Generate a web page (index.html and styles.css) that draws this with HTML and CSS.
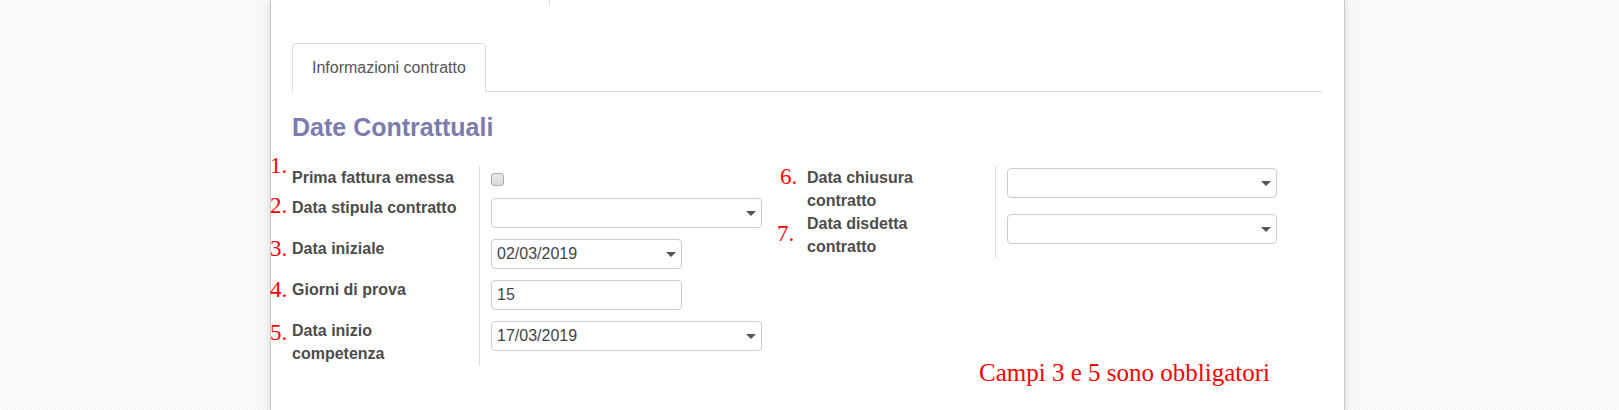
FILE: index.html
```html
<!DOCTYPE html>
<html lang="it">
<head>
<meta charset="utf-8">
<title>Informazioni contratto</title>
<link rel="stylesheet" href="styles.css">
</head>
<body>
<div class="page">
  <div class="sheet">
    <div class="topbar"><div class="topbar-box"></div></div>
    <div class="tabs"><div class="tab">Informazioni contratto</div></div>
    <h2 class="sep-title">Date Contrattuali</h2>
    <div class="groups">
      <div class="group group-left">
        <div class="lbl"><span class="num n1">1.</span>Prima fattura emessa</div>
        <div class="fld fld-check"><span class="checkbox"></span></div>

        <div class="lbl"><span class="num n2">2.</span>Data stipula contratto</div>
        <div class="fld"><div class="ctrl ctrl-lg has-caret"></div></div>

        <div class="lbl"><span class="num n3">3.</span>Data iniziale</div>
        <div class="fld"><div class="ctrl ctrl-sm has-caret">02/03/2019</div></div>

        <div class="lbl"><span class="num n4">4.</span>Giorni di prova</div>
        <div class="fld"><div class="ctrl ctrl-sm">15</div></div>

        <div class="lbl"><span class="num n5">5.</span>Data inizio competenza</div>
        <div class="fld"><div class="ctrl ctrl-lg has-caret">17/03/2019</div></div>
      </div>
      <div class="group group-right">
        <div class="lbl"><span class="num n6">6.</span>Data chiusura contratto</div>
        <div class="fld"><div class="ctrl ctrl-md has-caret"></div></div>

        <div class="lbl"><span class="num n7">7.</span>Data disdetta contratto</div>
        <div class="fld"><div class="ctrl ctrl-md has-caret"></div></div>
      </div>
    </div>
    <div class="note">Campi 3 e 5 sono obbligatori</div>
  </div>
</div>
</body>
</html>
```

FILE: styles.css
```css
html, body {
  margin: 0;
  padding: 0;
}

body {
  height: 410px;
  overflow: hidden;
  background-color: #f8f8f8;
  background-image: repeating-conic-gradient(#f5f5f5 0% 25%, #fcfcfc 0% 50%);
  background-size: 4px 4px;
  font-family: "Liberation Sans", Arial, sans-serif;
}

.page {
  padding-left: 270px;
}

.sheet {
  box-sizing: border-box;
  width: 1075px;
  min-height: 440px;
  background: #ffffff;
  border: 1px solid #c8c8d3;
  border-top: none;
  box-shadow: 0 0 9px rgba(0, 0, 0, 0.13);
  padding: 0 22px 40px 21px;
}

.topbar {
  height: 6px;
}

.topbar-box {
  width: 257px;
  height: 6px;
  border-right: 1px solid #dcdcdc;
}

.tabs {
  display: flex;
  margin-top: 37px;
  border-bottom: 1px solid #dddddd;
}

.tab {
  padding: 12px 19px;
  line-height: 23px;
  font-size: 16px;
  color: #555555;
  background: #ffffff;
  border: 1px solid #dddddd;
  border-bottom-color: #ffffff;
  border-radius: 4px 4px 0 0;
  margin-bottom: -1px;
}

.sep-title {
  margin: 20px 0 0;
  font-size: 25px;
  line-height: 30px;
  font-weight: bold;
  color: #7c7bad;
}

.groups {
  display: grid;
  grid-template-columns: 515px 515px;
  margin-top: 24px;
}

.group {
  display: grid;
  align-items: start;
  align-content: start;
}

.group-left {
  grid-template-columns: 187px 1fr;
}

.group-right {
  grid-template-columns: 188px 1fr;
}

.lbl {
  position: relative;
  padding-right: 15px;
  font-size: 16px;
  line-height: 23px;
  font-weight: bold;
  color: #4c4c4c;
}

.fld {
  align-self: stretch;
  border-left: 1px solid #dddddd;
  padding-left: 11px;
}

.fld-check {
  box-sizing: border-box;
  padding-top: 7px;
  height: 30px;
}

.checkbox {
  display: block;
  box-sizing: border-box;
  width: 13px;
  height: 13px;
  border: 1px solid #a9a9a9;
  border-radius: 3px;
  background: linear-gradient(#e8e8e8, #d9d9d9);
}

.ctrl {
  position: relative;
  box-sizing: border-box;
  height: 30px;
  margin-top: 2px;
  margin-bottom: 9px;
  padding-left: 5px;
  border: 1px solid #cccccc;
  border-radius: 4px;
  background: #ffffff;
  font-size: 16px;
  line-height: 28px;
  color: #444444;
}

.ctrl-lg {
  width: 271px;
}

.ctrl-md {
  width: 270px;
}

.ctrl-sm {
  width: 191px;
}

.has-caret::after {
  content: "";
  position: absolute;
  right: 5px;
  top: 50%;
  margin-top: -2px;
  border-left: 5px solid transparent;
  border-right: 5px solid transparent;
  border-top: 5px solid #555555;
}

.num {
  position: absolute;
  left: -22px;
  font-family: "Liberation Serif", "Times New Roman", serif;
  font-weight: normal;
  font-size: 23px;
  line-height: 23px;
  color: #ff0000;
}

.n1 { top: -12px; }
.n2 { top: -2px; }
.n3 { top: 0; }
.n4 { top: 0; }
.n5 { top: 2px; }
.n6 { top: -1px; left: -27px; }
.n7 { top: 10px; left: -30px; }

.note {
  margin-top: -6px;
  padding-left: 687px;
  font-family: "Liberation Serif", "Times New Roman", serif;
  font-size: 25px;
  line-height: 28px;
  color: #ff0000;
}
```
